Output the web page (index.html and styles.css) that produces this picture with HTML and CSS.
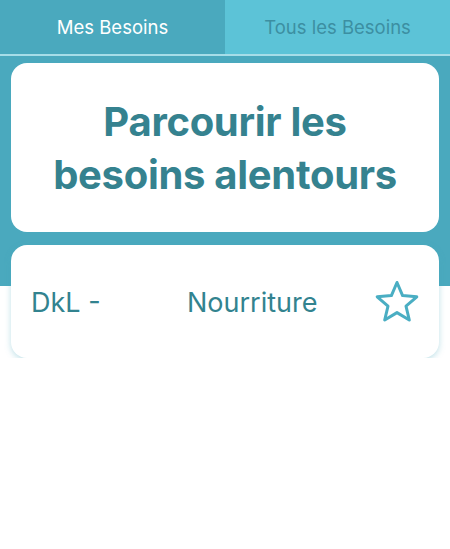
FILE: index.html
```html
<!DOCTYPE html>
<html lang="fr">
<head>
<meta charset="utf-8">
<link rel="stylesheet" href="styles.css">
</head>
<body>
<div class="tabs">
  <div class="tab active">Mes Besoins</div>
  <div class="tab">Tous les Besoins</div>
</div>
<div class="band">
  <div class="card hero">
    <h1>Parcourir les besoins alentours</h1>
  </div>
  <div class="card item">
    <span class="name">DkL -</span>
    <span class="cat">Nourriture</span>
    <svg class="star" width="46" height="44" viewBox="0 0 46 44">
      <path d="M23 2.5 L28.6 15.6 L42.8 16.8 L32 26.1 L35.3 40 L23 32.6 L10.7 40 L14 26.1 L3.2 16.8 L17.4 15.6 Z" fill="none" stroke="#4aaec3" stroke-width="3" stroke-linejoin="round"/>
    </svg>
  </div>
</div>
</body>
</html>
```
FILE: styles.css
```css
* { box-sizing: border-box; }
html, body { margin: 0; padding: 0; background: #fff; }
body { font-family: Inter, Roboto, "Noto Sans", sans-serif; width: 450px; }
.tabs { display: flex; height: 56px; border-bottom: 2px solid #a6dde8; }
.tab { flex: 1; display: flex; align-items: center; justify-content: center; font-size: 18.5px; color: #3c8fa2; background: #5cc3d7; }
.tab.active { background: #4aa9be; color: #fff; }
.band { background: linear-gradient(#4aa9be, #4aa9be) no-repeat 0 0 / 100% 230px; padding: 7px 11px 0; display: flex; flex-direction: column; gap: 13px; }
.card { background: #fff; border-radius: 16px; }
.hero { height: 169px; display: flex; align-items: center; justify-content: center; }
.hero h1 { margin: 0; text-align: center; font-size: 40px; line-height: 53px; font-weight: 700; color: #35828f; padding: 0 30px; letter-spacing: -0.3px; }
.item { height: 113px; display: flex; align-items: center; padding: 1px 19px 0 20px; box-shadow: 0 2px 6px rgba(74, 169, 190, 0.35); font-size: 27px; color: #32838f; }
.name { width: 156px; }
.cat { flex: 1; }
.star { display: block; }
```
